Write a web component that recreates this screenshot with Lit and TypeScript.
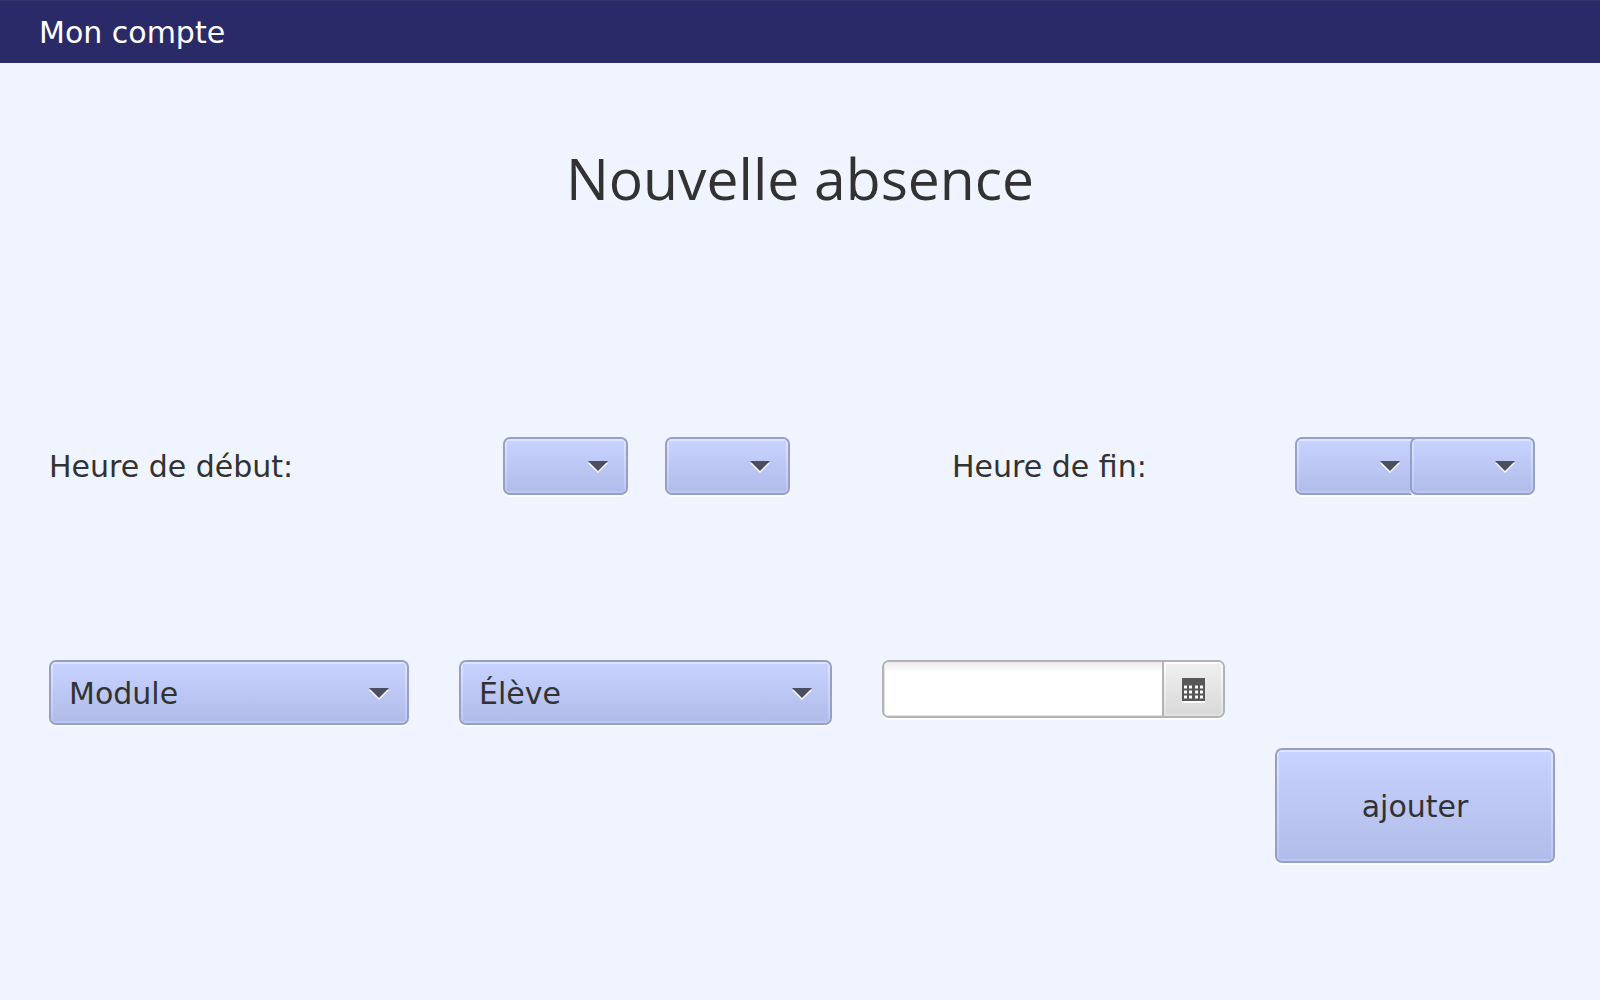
import { LitElement, html, svg, css } from "lit";
import { customElement, property } from "lit/decorators.js";

const range = (count: number, step = 1): string[] =>
  Array.from({ length: count }, (_, i) => String(i * step).padStart(2, "0"));

const HOURS = ["", ...range(24)];
const MINUTES = ["", ...range(12, 5)];

@customElement("combo-box")
class ComboBox extends LitElement {
  @property() label = "";
  @property({ attribute: false }) options: string[] = [];

  static styles = css`
    :host {
      display: grid;
      grid-template: 1fr / 1fr;
      min-height: 58px;
      min-width: 0;
    }
    .field {
      grid-area: 1 / 1;
      box-sizing: border-box;
      width: 100%;
      min-width: 0;
      margin: 0;
      padding: 2px 48px 0 18px;
      appearance: none;
      font: inherit;
      color: #323232;
      border: 2px solid #969fc6;
      border-radius: 7px;
      background:
        linear-gradient(#c8d2ff, #b2bce9) center / calc(100% - 4px) calc(100% - 4px) no-repeat padding-box,
        linear-gradient(#dfe5ff, #bcc6f2) padding-box;
      box-shadow: 0 2px 0 #fafcff;
    }
    .arrow {
      grid-area: 1 / 1;
      place-self: center end;
      width: 20px;
      height: 12px;
      padding-top: 2px;
      margin-right: 20px;
      pointer-events: none;
    }
  `;

  render() {
    return html`
      <select class="field" aria-label=${this.label}>
        ${this.options.map((o) => html`<option>${o}</option>`)}
      </select>
      <svg class="arrow" viewBox="0 0 20 12" aria-hidden="true">
        <path d="M0 2H20L10 12Z" fill="#fafcff" />
        <path d="M0 0H20L10 10Z" fill="#4b4d61" />
      </svg>
    `;
  }
}

@customElement("date-field")
class DateField extends LitElement {
  static styles = css`
    :host {
      display: block;
      min-width: 0;
    }
    .shade {
      border-radius: 7px;
      box-shadow: 0 2px 0 #fafcff;
    }
    .picker {
      display: flex;
      box-sizing: border-box;
      height: 58px;
      overflow: hidden;
      border: 2px solid #b3b3b3;
      border-radius: 7px;
    }
    .text {
      flex: 1;
      min-width: 0;
      padding: 0 16px;
      border: 0;
      outline: 0;
      font: inherit;
      color: #323232;
      background: linear-gradient(#ececec, #ffffff 10px);
      box-shadow: inset 1px 0 #e4e4e4, inset 0 -1px #e4e4e4;
    }
    .open {
      display: grid;
      place-items: center;
      width: 61px;
      padding: 2px 0 0;
      border: 0;
      border-left: 2px solid #b3b3b3;
      background:
        linear-gradient(#efefef, #d9d9d9) center / calc(100% - 4px) calc(100% - 4px) no-repeat padding-box,
        linear-gradient(#fdfdfd, #e2e2e2) padding-box;
    }
    .icon {
      width: 23px;
      height: 25px;
    }
  `;

  render() {
    const cells = [7, 12, 17].flatMap((y) => [2, 7, 13, 18].map((x) => ({ x, y })));
    return html`
      <div class="shade">
        <div class="picker">
          <input class="text" type="text" aria-label="Date" />
          <button class="open" type="button" aria-label="Calendrier">
            <svg class="icon" viewBox="0 0 23 25" aria-hidden="true">
              <rect y="2" width="23" height="23" fill="#fff" />
              <rect width="23" height="23" fill="#575757" />
              ${cells.map(
                ({ x, y }) => svg`
                  <rect x=${x} y=${y} width="3" height="4" fill="#a6a6a6" />
                  <rect x=${x} y=${y + 1} width="3" height="2" fill="#fff" />
                `
              )}
            </svg>
          </button>
        </div>
      </div>
    `;
  }
}

@customElement("app-root")
class AppRoot extends LitElement {
  static styles = css`
    :host {
      display: block;
      min-height: 100vh;
      background: #eff4ff;
      color: #323232;
      font: 30px/36px Verdana, "DejaVu Sans", sans-serif;
    }
    .bar {
      padding: 14px 39px 12px;
      border-top: 1px solid #37366f;
      background: #2b2a68;
    }
    .account {
      display: inline-block;
      color: #fff;
      text-decoration: none;
    }
    .title {
      margin: 75px 0 0;
      text-align: center;
      font: 400 57px/80px "Segoe UI", "Open Sans", sans-serif;
    }
    .form {
      padding: 219px 45px 0 49px;
    }
    .times {
      display: grid;
      grid-template-columns: 454fr 449fr 343fr 260fr;
      align-items: center;
    }
    .caption {
      padding-top: 2px;
    }
    .pair {
      display: flex;
      gap: 37px;
    }
    .pair.joined {
      gap: 0;
    }
    .time {
      width: 125px;
    }
    .joined .time + .time {
      margin-left: -10px;
    }
    .details {
      display: grid;
      grid-template-columns: 360fr 373fr 343fr 280fr;
      gap: 23px 50px;
      margin-top: 165px;
      align-items: start;
    }
    .choice {
      min-height: 65px;
    }
    .add {
      grid-area: 2 / 4;
      min-height: 115px;
      padding: 2px 0 0;
      font: inherit;
      color: #323232;
      border: 2px solid #969fc6;
      border-radius: 7px;
      background:
        linear-gradient(#c8d2ff, #b2bce9) center / calc(100% - 4px) calc(100% - 4px) no-repeat padding-box,
        linear-gradient(#dfe5ff, #bcc6f2) padding-box;
      box-shadow: 0 2px 0 #fafcff;
    }
  `;

  render() {
    return html`
      <nav class="bar"><a class="account" href="#compte">Mon compte</a></nav>
      <h1 class="title">Nouvelle absence</h1>
      <form class="form">
        <div class="times">
          <span class="caption">Heure de début:</span>
          <div class="pair" role="group" aria-label="Heure de début">
            <combo-box class="time" label="Heure de début, heures" .options=${HOURS}></combo-box>
            <combo-box class="time" label="Heure de début, minutes" .options=${MINUTES}></combo-box>
          </div>
          <span class="caption">Heure de fin:</span>
          <div class="pair joined" role="group" aria-label="Heure de fin">
            <combo-box class="time" label="Heure de fin, heures" .options=${HOURS}></combo-box>
            <combo-box class="time" label="Heure de fin, minutes" .options=${MINUTES}></combo-box>
          </div>
        </div>
        <div class="details">
          <combo-box class="choice" label="Module" .options=${["Module"]}></combo-box>
          <combo-box class="choice" label="Élève" .options=${["Élève"]}></combo-box>
          <date-field></date-field>
          <button class="add" type="button">ajouter</button>
        </div>
      </form>
    `;
  }
}
